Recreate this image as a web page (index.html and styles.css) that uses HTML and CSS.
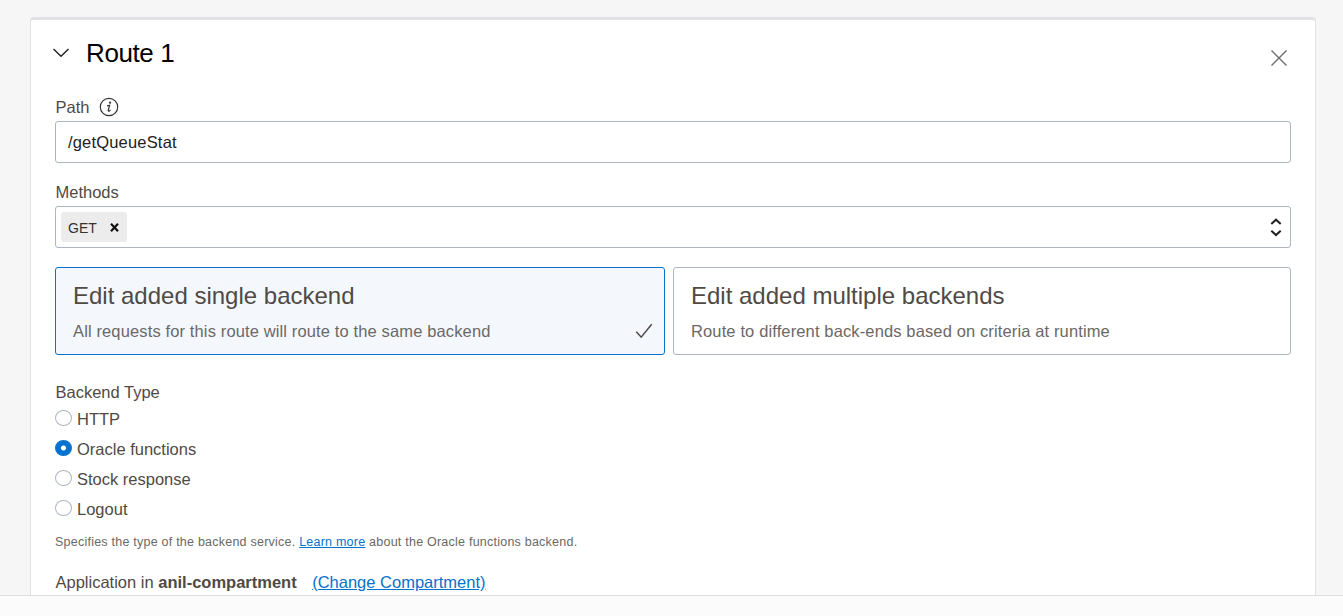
FILE: index.html
```html
<!DOCTYPE html>
<html lang="en">
<head>
<meta charset="utf-8">
<title>Route 1</title>
<link rel="stylesheet" href="styles.css">
</head>
<body>
<main class="viewport">
  <section class="card">
    <header class="card-header">
      <svg class="chevron" width="18" height="12" viewBox="0 0 18 12"><path d="M1.5 2 L9 9.3 L16.5 2"/></svg>
      <h1 class="title">Route 1</h1>
      <svg class="close" width="18" height="18" viewBox="0 0 18 18"><path d="M1.5 1.5 L16.5 16.5 M16.5 1.5 L1.5 16.5"/></svg>
    </header>
    <div class="label path-label"><span>Path</span>
      <svg class="info" width="20" height="20" viewBox="0 0 20 20"><circle cx="10" cy="10" r="8.7"/><circle class="dot" cx="11.1" cy="5.7" r="1.1"/><path d="M8 8.8 L10.6 8.3 L9.2 13.4 Q9.1 14.6 10.3 13.9 L11.5 12.9"/></svg>
    </div>
    <div class="field path-field">/getQueueStat</div>
    <div class="label methods-label">Methods</div>
    <div class="field select">
      <span class="chip">GET<svg class="chip-x" width="9" height="9" viewBox="0 0 9 9"><path d="M1 .8 L8 8.2 M8 .8 L1 8.2"/></svg></span>
      <svg class="sort" width="12" height="20" viewBox="0 0 12 20"><path d="M1.3 7 L6 2.7 L10.7 7 M1.3 13.8 L6 18.1 L10.7 13.8"/></svg>
    </div>
    <div class="options">
      <div class="option selected">
        <h2 class="option-title">Edit added single backend</h2>
        <p class="option-text">All requests for this route will route to the same backend</p>
        <svg class="check" width="18" height="16" viewBox="0 0 18 16"><path d="M1.3 8.7 L6.2 14.2 L16.7 1.2"/></svg>
      </div>
      <div class="option">
        <h2 class="option-title">Edit added multiple backends</h2>
        <p class="option-text">Route to different back-ends based on criteria at runtime</p>
      </div>
    </div>
    <div class="label type-label">Backend Type</div>
    <div class="radios">
      <div class="radio"><span class="circle"></span><span>HTTP</span></div>
      <div class="radio"><span class="circle on"></span><span>Oracle functions</span></div>
      <div class="radio"><span class="circle"></span><span>Stock response</span></div>
      <div class="radio"><span class="circle"></span><span>Logout</span></div>
    </div>
    <p class="hint">Specifies the type of the backend service. <a class="link">Learn more</a> about the Oracle functions backend.</p>
    <div class="label application"><span>Application in <b>anil-compartment</b></span><a class="link">(Change Compartment)</a></div>
  </section>
</main>
<footer class="footer"></footer>
</body>
</html>
```
FILE: styles.css
```css
* { box-sizing: border-box; }
body {
  margin: 0;
  height: 616px;
  overflow: hidden;
  display: flex;
  flex-direction: column;
  background: #f6f6f6;
  color: #4f4a45;
  font: 16.5px/20px "Liberation Sans", Arial, sans-serif;
}
h1, h2, p { margin: 0; font-weight: 400; }
svg { fill: none; flex: none; }
.viewport { height: 595px; overflow: hidden; padding: 17px 27px 0 30px; }
.footer { height: 21px; background: #fbfbfb; border-top: 1px solid #e0e0e0; }
.card {
  height: 640px;
  background: #fff;
  border: 1px solid #e1e1e6;
  border-top-width: 3px;
  border-radius: 4px;
  padding: 0 24px;
}
.card-header { display: flex; height: 75px; align-items: flex-start; }
.chevron { margin: 27px 0 0 -3px; stroke: #222; stroke-width: 1.4; }
.title { margin: 18px 0 0 16px; font-size: 26px; line-height: 30px; color: #000; letter-spacing: -.4px; }
.close { margin: 29px 3px 0 auto; stroke: #6b6b6b; stroke-width: 1.4; }
.label { line-height: 20px; padding-left: .5px; }
.path-label { display: flex; gap: 9.5px; height: 26px; padding-top: 2px; }
.info { margin-top: -.5px; stroke: #333; stroke-width: 1.2; }
.info .dot { fill: #333; stroke: none; }
.field { display: flex; align-items: center; height: 42px; border: 1px solid #aeb5c0; border-radius: 3px; background: #fff; }
.path-field { padding-left: 12px; color: #222; letter-spacing: .18px; }
.path-field { padding-bottom: 1px; }
.methods-label { margin-top: 19px; height: 24px; }
.select { padding: 0 8px 0 5px; justify-content: space-between; }
.chip { display: flex; align-items: center; justify-content: space-between; width: 66px; height: 30px; padding: 2px 8px 0 7px; border-radius: 3px; background: #ececec; color: #333; font-size: 14px; }
.chip-x { margin-bottom: 2px; stroke: #111; stroke-width: 2.2; }
.sort { stroke: #222; stroke-width: 2; }
.options { display: grid; grid-template-columns: 610px 618px; gap: 8px; margin-top: 19px; }
.option { position: relative; height: 88px; padding: 13px 17px; border: 1px solid #aeb5c0; border-radius: 3px; }
.selected { background: #f4f8fd; border-color: #0572ce; }
.option-title { font-size: 24px; line-height: 30px; }
.option-text { margin-top: 10px; color: #6b6866; line-height: 20px; letter-spacing: .13px; }
.check { position: absolute; right: 11px; bottom: 15px; stroke: #4f4a45; stroke-width: 1.5; }
.type-label { margin-top: 27px; }
.radios { display: grid; grid-auto-rows: 30px; margin-top: 2px; }
.radio { display: flex; align-items: center; gap: 5px; }
.circle { width: 17px; height: 16px; margin-top: -2px; border: 1px solid #aeb5c0; border-radius: 50%; }
.on { border-color: #0572ce; background: radial-gradient(circle, #fff 2.1px, #0572ce 2.9px); }
.hint { margin-top: 9px; font-size: 12.5px; line-height: 18px; color: #6b6866; letter-spacing: .232px; }
.link { color: #0572ce; text-decoration: underline; }
.application { display: flex; gap: 15.5px; margin-top: 21px; }
```
